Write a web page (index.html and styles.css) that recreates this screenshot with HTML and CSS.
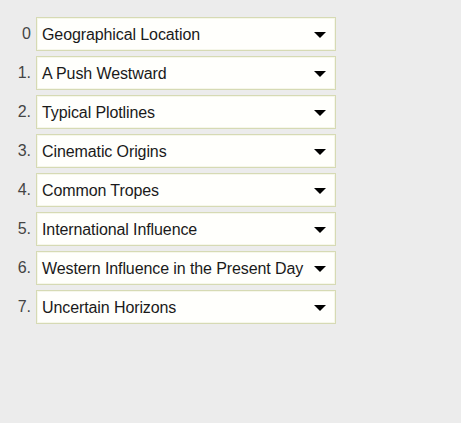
FILE: index.html
```html
<!DOCTYPE html>
<html>
<head>
<meta charset="utf-8">
<link rel="stylesheet" href="styles.css">
</head>
<body>
<div class="list">
  <div class="row"><span class="num">0</span><div class="select"><span class="label">Geographical Location</span><span class="arrow"></span></div></div>
  <div class="row"><span class="num">1.</span><div class="select"><span class="label">A Push Westward</span><span class="arrow"></span></div></div>
  <div class="row"><span class="num">2.</span><div class="select"><span class="label">Typical Plotlines</span><span class="arrow"></span></div></div>
  <div class="row"><span class="num">3.</span><div class="select"><span class="label">Cinematic Origins</span><span class="arrow"></span></div></div>
  <div class="row"><span class="num">4.</span><div class="select"><span class="label">Common Tropes</span><span class="arrow"></span></div></div>
  <div class="row"><span class="num">5.</span><div class="select"><span class="label">International Influence</span><span class="arrow"></span></div></div>
  <div class="row"><span class="num">6.</span><div class="select"><span class="label">Western Influence in the Present Day</span><span class="arrow"></span></div></div>
  <div class="row"><span class="num">7.</span><div class="select"><span class="label">Uncertain Horizons</span><span class="arrow"></span></div></div>
</div>
</body>
</html>
```

FILE: styles.css
```css
html, body {
  margin: 0;
  padding: 0;
  background: #ececec;
  font-family: "Liberation Sans", Arial, sans-serif;
}
.list {
  display: flex;
  flex-direction: column;
  gap: 5px;
  padding: 17px 0 0 0;
}
.row {
  display: flex;
  align-items: center;
}
.num {
  width: 36px;
  text-align: right;
  padding-right: 5px;
  box-sizing: border-box;
  font-size: 16px;
  color: #444;
}
.select {
  width: 300px;
  height: 34px;
  box-sizing: border-box;
  border: 1px solid #d6dab4;
  box-shadow: inset 0 0 0 1px #f6f7ea;
  background: #fffffc;
  display: flex;
  align-items: center;
  justify-content: space-between;
  padding: 1px 8px 0 5px;
}
.label {
  font-size: 16px;
  color: #1a1a1a;
  letter-spacing: -0.1px;
}
.arrow {
  width: 0;
  height: 0;
  border-left: 6px solid transparent;
  border-right: 6px solid transparent;
  border-top: 6px solid #000;
  margin-right: 1px;
}
```
